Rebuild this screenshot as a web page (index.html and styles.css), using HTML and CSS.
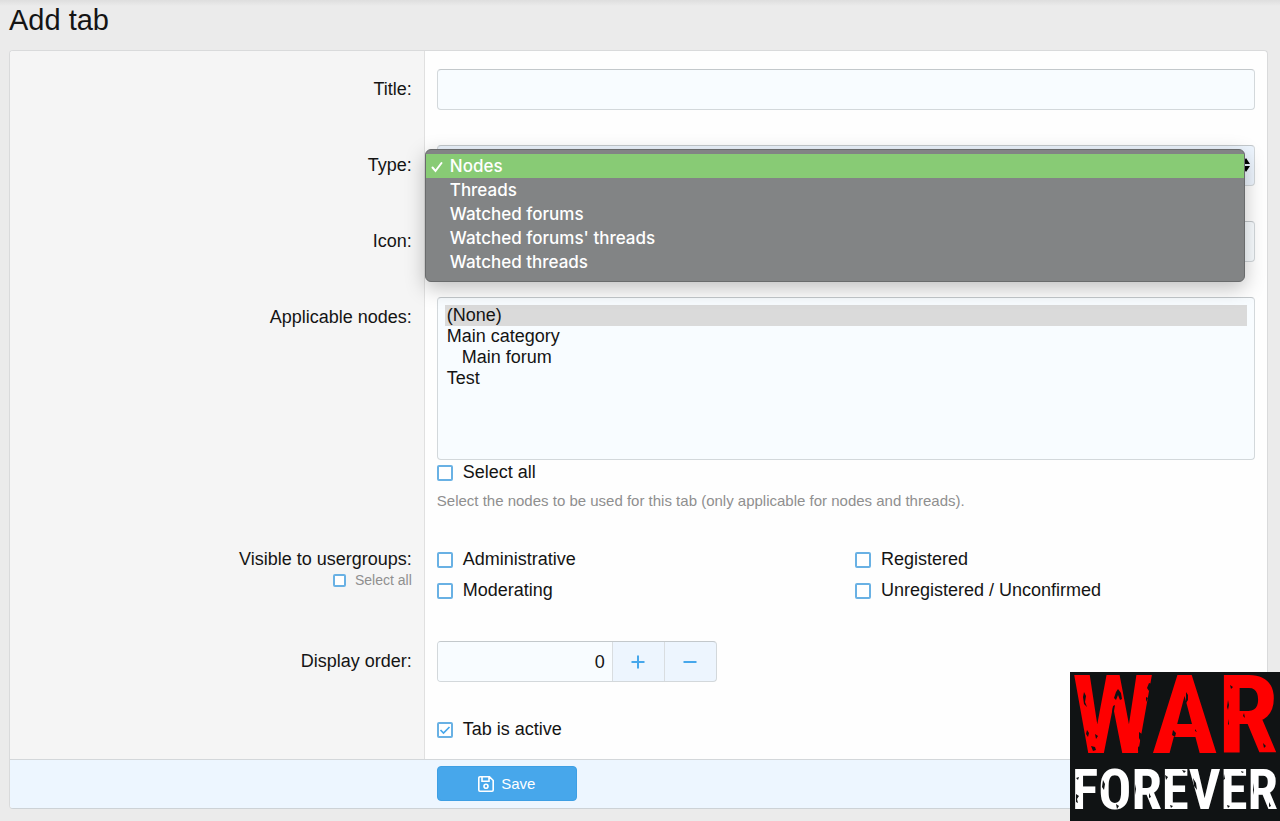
FILE: index.html
```html
<!DOCTYPE html>
<html lang="en">
<head>
<meta charset="utf-8">
<meta name="viewport" content="width=device-width, initial-scale=1">
<title>Add tab</title>
<link rel="stylesheet" href="styles.css">
</head>
<body>
<main class="page">
  <h1 class="page-title">Add tab</h1>
  <form class="block">
    <div class="row">
      <div class="row-label"><label for="title">Title:</label></div>
      <div class="row-field"><input class="input" type="text" id="title"></div>
    </div>
    <div class="row">
      <div class="row-label"><label for="type">Type:</label></div>
      <div class="row-field">
        <div class="picker">
          <select class="input input-select" id="type">
            <option selected></option>
          </select>
          <svg class="picker-arrows" viewBox="0 0 8 14" aria-hidden="true"><path d="M4 0l4 6H0zM0 8h8l-4 6z"/></svg>
          <ul class="menu" role="listbox" aria-label="Type">
            <li class="menu-item is-active" role="option" aria-selected="true"><svg class="menu-check" viewBox="0 0 12 12" aria-hidden="true"><path d="M1.500 6.500l3 3.500L10.500 2"/></svg>Nodes</li>
            <li class="menu-item" role="option">Threads</li>
            <li class="menu-item" role="option">Watched forums</li>
            <li class="menu-item" role="option">Watched forums' threads</li>
            <li class="menu-item" role="option">Watched threads</li>
          </ul>
        </div>
      </div>
    </div>
    <div class="row">
      <div class="row-label"><label for="icon">Icon:</label></div>
      <div class="row-field"><input class="input" type="text" id="icon"></div>
    </div>
    <div class="row">
      <div class="row-label"><label for="nodes">Applicable nodes:</label></div>
      <div class="row-field">
        <select class="input input-list" id="nodes" multiple size="7">
          <option class="is-picked">(None)</option>
          <option>Main category</option>
          <option class="is-child">Main forum</option>
          <option>Test</option>
        </select>
        <label class="choice"><input class="check" type="checkbox">Select all</label>
        <p class="hint">Select the nodes to be used for this tab (only applicable for nodes and threads).</p>
      </div>
    </div>
    <div class="row">
      <div class="row-label row-label-plain">
        <span>Visible to usergroups:</span>
        <label class="choice choice-small"><input class="check check-small" type="checkbox">Select all</label>
      </div>
      <div class="row-field">
        <div class="groups">
          <label class="choice"><input class="check" type="checkbox">Administrative</label>
          <label class="choice"><input class="check" type="checkbox">Registered</label>
          <label class="choice"><input class="check" type="checkbox">Moderating</label>
          <label class="choice"><input class="check" type="checkbox">Unregistered / Unconfirmed</label>
        </div>
      </div>
    </div>
    <div class="row">
      <div class="row-label"><label for="order">Display order:</label></div>
      <div class="row-field">
        <div class="stepper">
          <input class="stepper-value" type="text" inputmode="numeric" id="order" value="0">
          <button class="stepper-button" type="button" aria-label="Increase"><svg viewBox="0 0 14 14" aria-hidden="true"><path d="M7 .5v13M.5 7h13"/></svg></button>
          <button class="stepper-button" type="button" aria-label="Decrease"><svg viewBox="0 0 14 14" aria-hidden="true"><path d="M.5 7h13"/></svg></button>
        </div>
      </div>
    </div>
    <div class="row">
      <div class="row-label"></div>
      <div class="row-field"><label class="choice"><input class="check" type="checkbox" checked>Tab is active</label></div>
    </div>
    <div class="footer">
      <button class="save" type="button"><svg class="save-icon" viewBox="0 0 16 16" aria-hidden="true"><path d="M2 .8h9.500L15.200 4.500V14a1.200 1.200 0 0 1-1.200 1.200H2A1.200 1.200 0 0 1 .8 14V2A1.200 1.200 0 0 1 2 .8zM4 1v4.200h7V1"/><circle cx="8" cy="10.200" r="2"/></svg>Save</button>
    </div>
  </form>
</main>
<aside class="badge" aria-label="War Forever">
  <span class="badge-top">WAR</span>
  <span class="badge-bottom">FOREVER</span>
  <svg class="badge-wear" viewBox="0 0 210 149" aria-hidden="true">
    <path d="M14 20l2 4-1 6 2 5-3-3-1-7zM17 58l2 3-1 4-2-3zM25 62l3 2-2 3zM21 74l4 1 1 3-3 1zM48 17l3 4 1 6-2 1-2-5-2 5-2-2 2-6zM43 34l2-1-1 6-2 2zM79 11l3 1-1 5-2 2-2-3zM76 25l2 1-2 4zM69 60l3 2 1 6-2 2-2-4zM68 74l2 3-2 3zM116 20l2 3v5l-2 3zM103 58l3 3-1 4-3-2zM125 57l2 3-2-1zM160 13l3 2-2 2zM158 28l1 5-1 5-1-3zM158 47l1 5-1 1zM174 41l1 5-2-2zM193 71l3 3-2 2zM6 106l3-1-1 3zM6 122l3 2-2 3 1 4-2-1zM33 108l2 4-1 6-2-3zM46 132l3 2-2 3zM65 112l1 5-1 6zM79 121l2 4-2 1zM95 103l3 2-2 3zM112 98l4 1-2 2zM100 133l3 1-2 2zM123 106l3 5 1 7-3-4zM154 102l1 5-2 1zM171 99l3 1-2 1zM157 133l3 1-2 2zM183 111l1 7-1 5zM194 106l3 3-2 1zM199 130l2 4-2 1z"/>
  </svg>
</aside>
</body>
</html>
```
FILE: styles.css
```css
* { box-sizing: border-box; }

body {
  margin: 0;
  background: linear-gradient(#dedede, #ebebeb 6px);
  color: #141414;
  font-family: "Liberation Sans", Arial, sans-serif;
  font-size: 18px;
  line-height: 24px;
}

input, select, button { font: inherit; color: inherit; }

.page { padding: 3px 12px 12px 9px; }

.page-title {
  margin: 0 0 13px;
  font-size: 29px;
  font-weight: 400;
  line-height: 34px;
}

.block {
  border: 1px solid #d9dadb;
  border-bottom-color: #cdd2d6;
  border-radius: 4px;
  background: #fefefe;
  overflow: hidden;
}

.row {
  display: grid;
  grid-template-columns: 33% 1fr;
}

.row-label {
  padding: 26px 12px 0;
  border-right: 1px solid #e0e0e0;
  background: #f5f5f5;
  text-align: right;
}

.row-label-plain { padding-top: 18px; }

.row-field { padding: 18px 12px 17px; }

.input {
  display: block;
  width: 100%;
  height: 41px;
  padding: 0 8px;
  border: 1px solid #d3d8db;
  border-top-color: #c3c8cb;
  border-radius: 4px;
  background: #f8fcff;
  outline: 0;
}

.input-select {
  appearance: none;
  background: #edf5fe;
}

.picker { position: relative; }

.picker-arrows {
  position: absolute;
  top: 13px;
  right: 5px;
  width: 8px;
  height: 14px;
}

.menu {
  position: absolute;
  z-index: 1;
  top: 4px;
  left: -12px;
  right: 10px;
  margin: 0;
  padding: 4px 0 7px;
  border: 1px solid #696b6c;
  border-radius: 6px;
  background: #828485;
  box-shadow: 0 6px 20px rgba(0, 0, 0, .25);
  color: #fff;
  font-family: Inter, sans-serif;
  font-size: 17px;
  font-weight: 500;
  line-height: 24px;
  list-style: none;
}

.menu-item {
  position: relative;
  padding-left: 24px;
}

.menu-item.is-active { background: #88cb75; }

.menu-check {
  position: absolute;
  top: 7px;
  left: 5px;
  width: 12px;
  height: 12px;
  fill: none;
  stroke: #fff;
  stroke-width: 2;
  stroke-linecap: round;
}

.input-list {
  height: 163px;
  padding: 7px;
}

.input-list option {
  min-height: 21px;
  padding: 0 2px;
  line-height: 21px;
}

.input-list .is-picked { background: #dadada; }
.input-list .is-child { padding-left: 17px; }

.choice {
  display: flex;
  align-items: center;
  gap: 10px;
  line-height: 25px;
}

.choice-small {
  justify-content: flex-end;
  gap: 9px;
  color: #8f8f8f;
  font-size: 14px;
  line-height: 18px;
}

.check {
  appearance: none;
  flex: none;
  width: 16px;
  height: 16px;
  margin: 0;
  border: 2px solid #69b1e4;
  border-radius: 2px;
  background: #fff;
}

.check-small {
  width: 13px;
  height: 13px;
}

.check:checked {
  background: #fff url('data:image/svg+xml,<svg xmlns="http://www.w3.org/2000/svg" viewBox="0 0 12 12"><path d="M1.500 6l3 3 6-6" fill="none" stroke="%2347a7eb" stroke-width="1.700"/></svg>') center / 12px 12px no-repeat;
}

.hint {
  margin: 5px 0 0;
  color: #8f8f8f;
  font-size: 15px;
  line-height: 22px;
}

.groups {
  display: grid;
  grid-template-columns: 1fr 1fr;
  gap: 6px 18px;
  padding-bottom: 3px;
}

.stepper {
  display: flex;
  width: 280px;
  height: 41px;
  border: 1px solid #d3d8db;
  border-top-color: #c3c8cb;
  border-radius: 4px;
  background: #edf5fe;
  overflow: hidden;
}

.stepper-value {
  flex: 1;
  min-width: 0;
  padding: 0 7px;
  border: 0;
  background: #f8fcff;
  text-align: right;
}

.stepper-button {
  display: grid;
  place-items: center;
  width: 52px;
  padding: 0;
  border: 0;
  border-left: 1px solid #d9dde0;
  background: none;
}

.stepper-button svg {
  width: 14px;
  height: 14px;
  stroke: #47a7eb;
  stroke-width: 2;
}

.footer {
  padding: 6px 12px 7px calc(33% + 12px);
  border-top: 1px solid #d3d7da;
  background: #edf6ff;
}

.save {
  display: flex;
  align-items: center;
  justify-content: center;
  gap: 7px;
  width: 140px;
  height: 35px;
  border: 1px solid #3d9fe4;
  border-radius: 4px;
  background: #47a7eb;
  color: #fff;
  font-size: 15px;
}

.save-icon {
  width: 16px;
  height: 16px;
  fill: none;
  stroke: #fff;
  stroke-width: 1.6;
}

.badge {
  position: fixed;
  right: 0;
  bottom: 0;
  z-index: 2;
  display: grid;
  grid-template-rows: 88px 61px;
  place-items: center;
  width: 210px;
  background: #101314;
  font-family: "Roboto Condensed", "Liberation Sans Narrow", "Liberation Sans", sans-serif;
  font-weight: 700;
}

.badge-top {
  color: #fe0000;
  font-size: 110px;
  line-height: 88px;
}

.badge-bottom {
  color: #fff;
  font-size: 55px;
  line-height: 61px;
}

.badge-wear {
  position: absolute;
  inset: 0;
  fill: #101314;
}
```
